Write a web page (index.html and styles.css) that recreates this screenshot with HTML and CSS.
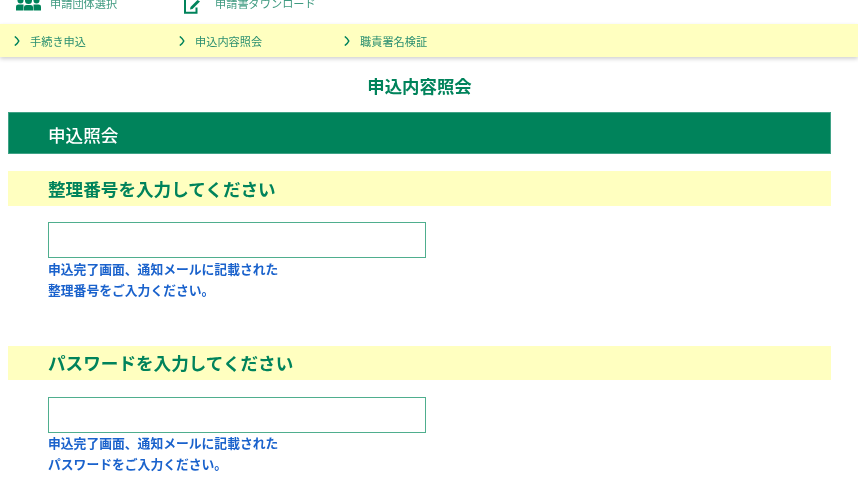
FILE: index.html
```html
<!DOCTYPE html>
<html lang="ja">
<head>
<title>申込内容照会</title>
<meta http-equiv="Content-Type" content="text/html; charset=UTF-8" />
<link rel="stylesheet" href="styles.css">
</head>

<body>

<div class="topbar">
  <a class="top-link top-group">
    <svg class="icon-group" width="25" height="11" viewBox="0 0 25 11">
      <circle cx="4.500" cy="0.500" r="3"/>
      <circle cx="12.500" cy="0.500" r="3.500"/>
      <circle cx="20.500" cy="0.500" r="3"/>
      <path d="M0 10.500V6.500Q0 4.500 2.500 4.500H7.500V10.500Z"/>
      <path d="M8 10.500V7Q8 5 10.500 5H14.500Q17 5 17 7V10.500Z"/>
      <path d="M17.500 10.500V4.500H22.500Q25 4.500 25 6.500V10.500Z"/>
    </svg>
    <span>申請団体選択</span>
  </a>
  <a class="top-link top-download">
    <svg class="icon-edit" width="17" height="14" viewBox="0 0 17 14">
      <path d="M1 0V12.700H12.500V7.500" fill="none" stroke-width="2"/>
      <path d="M6 9.500L6.500 7L13.500 0L16 1.500L8.500 9Z" stroke="none"/>
    </svg>
    <span>申請書ダウンロード</span>
  </a>
</div>

<ul class="nav">
  <li><svg class="chev" width="6" height="10" viewBox="0 0 6 10"><path d="M0.800 0.500Q4 3 4.800 5Q4 7 0.800 9.500"/></svg>手続き申込</li>
  <li><svg class="chev" width="6" height="10" viewBox="0 0 6 10"><path d="M0.800 0.500Q4 3 4.800 5Q4 7 0.800 9.500"/></svg>申込内容照会</li>
  <li><svg class="chev" width="6" height="10" viewBox="0 0 6 10"><path d="M0.800 0.500Q4 3 4.800 5Q4 7 0.800 9.500"/></svg>職責署名検証</li>
</ul>

<div class="content">
  <h1 class="page-title">申込内容照会</h1>

  <h2 class="band">申込照会</h2>

  <section class="field">
    <h3 class="field-title">整理番号を入力してください</h3>
    <input class="field-input" type="text">
    <p class="help">申込完了画面、通知メールに記載された<br>整理番号をご入力ください。</p>
  </section>

  <section class="field">
    <h3 class="field-title">パスワードを入力してください</h3>
    <input class="field-input" type="password">
    <p class="help">申込完了画面、通知メールに記載された<br>パスワードをご入力ください。</p>
  </section>
</div>

</body>
</html>
```

FILE: styles.css
```css
html,body{height:483px;overflow:hidden;}
body{margin:0;background:#fff;font-family:"Noto Sans CJK JP","Noto Sans",sans-serif;color:#00835b;filter:blur(.35px);}

.topbar{display:flex;height:24px;overflow:hidden;padding-left:16px;}
.top-link{display:flex;height:14px;align-items:flex-start;font-size:11.2px;line-height:13px;color:#3f9a80;}
.top-link span{position:relative;top:-3px;}
.top-group{width:168px;}
.top-group span{margin-left:9px;}
.top-download span{margin-left:14px;}
.icon-group,.icon-edit{fill:#00835b;stroke:#00835b;flex:none;}
.icon-group{stroke:none;}

.nav{display:flex;list-style:none;margin:0;padding:0 0 0 14px;height:33px;align-items:center;background:#ffffc0;box-shadow:0 2px 4px rgba(0,0,0,.18);font-size:11.2px;color:#2b8f70;}
.nav li{width:165px;display:flex;align-items:center;}
.chev{flex:none;margin-right:10px;margin-top:1px;fill:none;stroke:#00835b;stroke-width:1.5;}

.page-title{margin:0;padding-top:18px;height:37px;line-height:22px;font-size:17.4px;font-weight:bold;text-align:center;}

.content{width:823px;margin-left:8px;}
.band{margin:0;height:42px;line-height:44px;padding-left:39px;background:#00835b;border:1px solid #3fa286;box-sizing:border-box;color:#fff;font-size:17.6px;font-weight:500;}

.field{margin-top:17px;height:158px;}
.field-title{margin:0;height:35px;line-height:36px;padding-left:40px;background:#ffffc0;font-size:17.6px;font-weight:bold;}
.field + .field .field-title{line-height:34px;height:34px;}
.field-input{display:block;box-sizing:border-box;width:378px;height:36px;margin:16px 0 0 40px;border:1px solid #4fae8e;border-radius:0;background:#fff;outline:none;}
.field + .field .field-input{margin-top:17px;}
.help{margin:0 0 0 40px;font-size:12.8px;line-height:21px;font-weight:bold;color:#1a62cc;}
.field + .field .help{margin-top:-1px;}
```
